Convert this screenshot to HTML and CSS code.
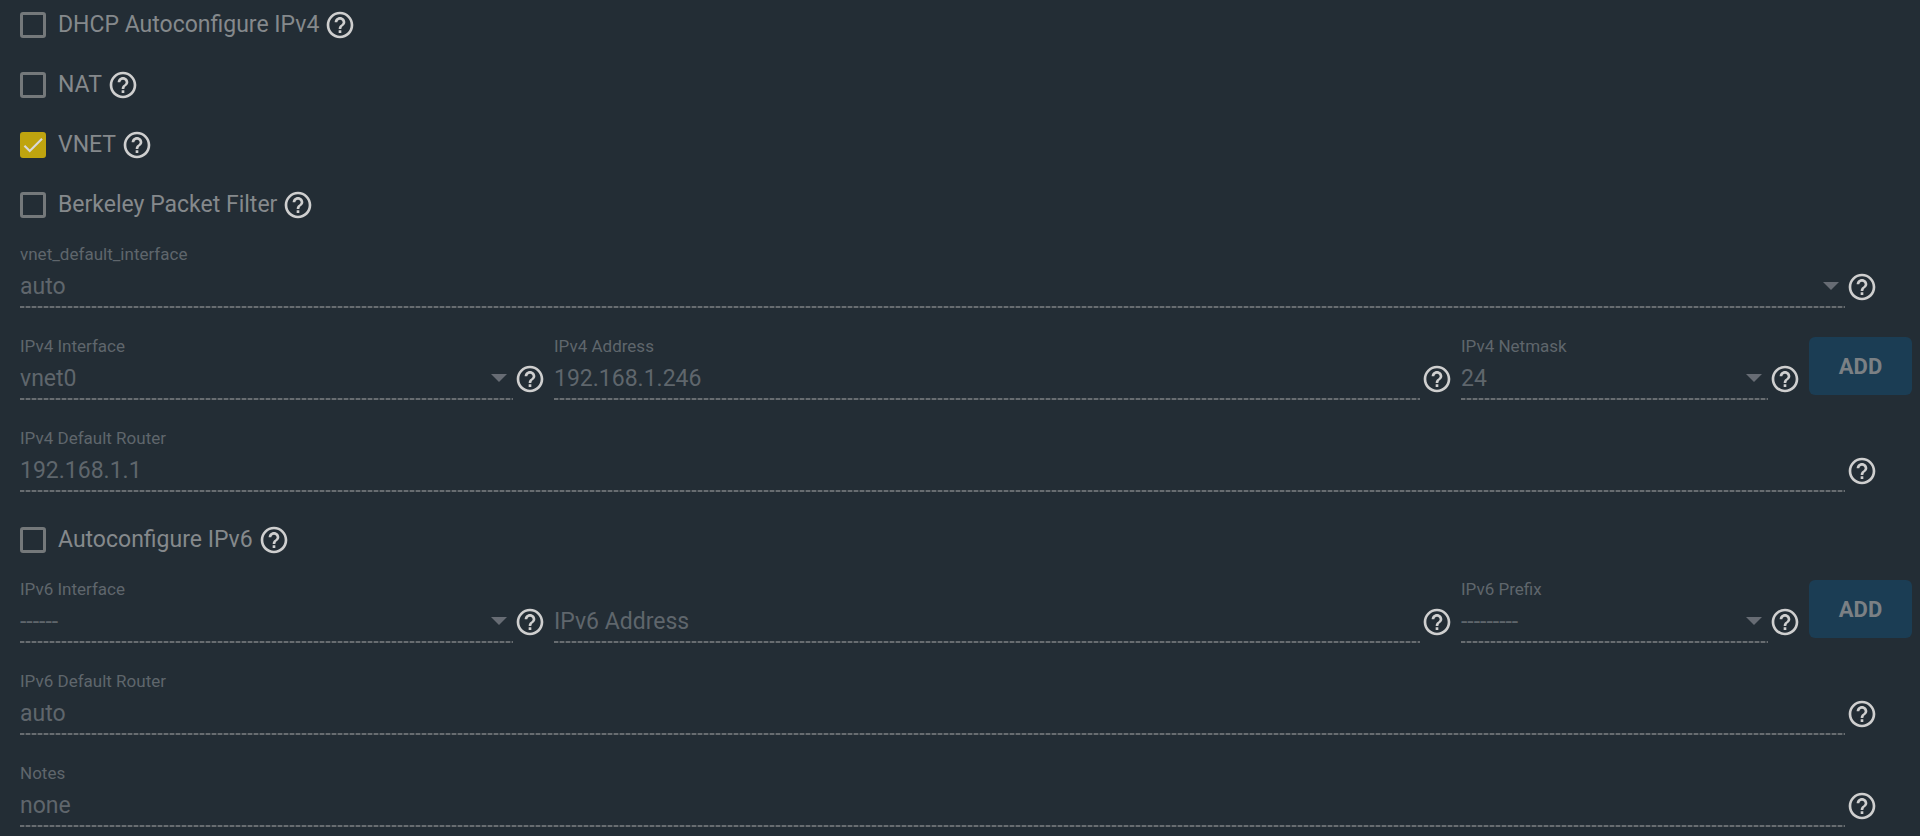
FILE: index.html
```html
<!DOCTYPE html>
<html lang="en">
<head>
    <meta charset="UTF-8">
    <meta name="viewport" content="width=device-width, initial-scale=1.0">
    <title>Jail Properties</title>
    <link rel="stylesheet" href="styles.css">
</head>
<body>
    <!-- Shared icons -->
    <svg class="sprite" aria-hidden="true">
        <symbol id="help" viewBox="0 0 24 24">
            <path d="M11 18h2v-2h-2v2zm1-16C6.480 2 2 6.480 2 12s4.480 10 10 10 10-4.480 10-10S17.520 2 12 2zm0 18c-4.410 0-8-3.590-8-8s3.590-8 8-8 8 3.590 8 8-3.590 8-8 8zm0-14c-2.210 0-4 1.790-4 4h2c0-1.100.9-2 2-2s2 .9 2 2c0 2-3 1.750-3 5h2c0-2.250 3-2.500 3-5 0-2.210-1.790-4-4-4z"/>
        </symbol>
        <symbol id="arrow" viewBox="0 0 16 8">
            <path d="M0 0h16l-8 8z"/>
        </symbol>
        <symbol id="check" viewBox="0 0 24 24">
            <path d="M4.100 12.700L9 17.600 20.300 6.300" fill="none" stroke="currentColor" stroke-width="2"/>
        </symbol>
    </svg>

    <form class="jail-form">
        <div class="check-group">
            <div class="check-row">
                <label class="check"><input type="checkbox"><svg><use href="#check"/></svg>DHCP Autoconfigure IPv4</label>
                <svg class="help"><use href="#help"/></svg>
            </div>
            <div class="check-row">
                <label class="check"><input type="checkbox"><svg><use href="#check"/></svg>NAT</label>
                <svg class="help"><use href="#help"/></svg>
            </div>
            <div class="check-row">
                <label class="check"><input type="checkbox" checked><svg><use href="#check"/></svg>VNET</label>
                <svg class="help"><use href="#help"/></svg>
            </div>
            <div class="check-row">
                <label class="check"><input type="checkbox"><svg><use href="#check"/></svg>Berkeley Packet Filter</label>
                <svg class="help"><use href="#help"/></svg>
            </div>
        </div>

        <div class="row">
            <div class="field">
                <label for="vnet-default">vnet_default_interface</label>
                <div class="control">
                    <select id="vnet-default" disabled><option>auto</option></select>
                    <svg class="arrow"><use href="#arrow"/></svg>
                </div>
            </div>
            <svg class="help"><use href="#help"/></svg>
        </div>

        <div class="row row-address">
            <div class="cell">
                <div class="field">
                    <label for="ip4-interface">IPv4 Interface</label>
                    <div class="control">
                        <select id="ip4-interface" disabled><option>vnet0</option></select>
                        <svg class="arrow"><use href="#arrow"/></svg>
                    </div>
                </div>
                <svg class="help"><use href="#help"/></svg>
            </div>
            <div class="cell">
                <div class="field">
                    <label for="ip4-address">IPv4 Address</label>
                    <div class="control">
                        <input id="ip4-address" type="text" value="192.168.1.246" disabled>
                    </div>
                </div>
                <svg class="help"><use href="#help"/></svg>
            </div>
            <div class="cell">
                <div class="field">
                    <label for="ip4-netmask">IPv4 Netmask</label>
                    <div class="control">
                        <select id="ip4-netmask" disabled><option>24</option></select>
                        <svg class="arrow"><use href="#arrow"/></svg>
                    </div>
                </div>
                <svg class="help"><use href="#help"/></svg>
            </div>
            <button class="add" type="button" disabled>ADD</button>
        </div>

        <div class="row">
            <div class="field">
                <label for="ip4-router">IPv4 Default Router</label>
                <div class="control">
                    <input id="ip4-router" type="text" value="192.168.1.1" disabled>
                </div>
            </div>
            <svg class="help"><use href="#help"/></svg>
        </div>

        <div class="check-group">
            <div class="check-row">
                <label class="check"><input type="checkbox"><svg><use href="#check"/></svg>Autoconfigure IPv6</label>
                <svg class="help"><use href="#help"/></svg>
            </div>
        </div>

        <div class="row row-address">
            <div class="cell">
                <div class="field">
                    <label for="ip6-interface">IPv6 Interface</label>
                    <div class="control">
                        <select id="ip6-interface" disabled><option>------</option></select>
                        <svg class="arrow"><use href="#arrow"/></svg>
                    </div>
                </div>
                <svg class="help"><use href="#help"/></svg>
            </div>
            <div class="cell">
                <div class="field">
                    <div class="control">
                        <input type="text" placeholder="IPv6 Address" aria-label="IPv6 Address" disabled>
                    </div>
                </div>
                <svg class="help"><use href="#help"/></svg>
            </div>
            <div class="cell">
                <div class="field">
                    <label for="ip6-prefix">IPv6 Prefix</label>
                    <div class="control">
                        <select id="ip6-prefix" disabled><option>---------</option></select>
                        <svg class="arrow"><use href="#arrow"/></svg>
                    </div>
                </div>
                <svg class="help"><use href="#help"/></svg>
            </div>
            <button class="add" type="button" disabled>ADD</button>
        </div>

        <div class="row">
            <div class="field">
                <label for="ip6-router">IPv6 Default Router</label>
                <div class="control">
                    <input id="ip6-router" type="text" value="auto" disabled>
                </div>
            </div>
            <svg class="help"><use href="#help"/></svg>
        </div>

        <div class="row">
            <div class="field">
                <label for="notes">Notes</label>
                <div class="control">
                    <input id="notes" type="text" value="none" disabled>
                </div>
            </div>
            <svg class="help"><use href="#help"/></svg>
        </div>
    </form>
</body>
</html>
```
FILE: styles.css
```css
* {
    box-sizing: border-box;
    margin: 0;
    padding: 0;
}

body {
    font-family: Roboto, sans-serif;
    font-size: 23px;
    color: #85898c;
    background-color: #232d35;
}

.sprite {
    display: none;
}

/* Form layout */
.jail-form {
    display: flex;
    flex-direction: column;
    padding: 9px 8px 0 20px;
}

.help {
    flex: none;
    width: 32px;
    height: 32px;
    fill: #cfcfcf;
}

/* Checkbox rows */
.check-group {
    display: grid;
    gap: 28px;
    margin-bottom: 21px;
}

.row + .check-group {
    margin-top: 6px;
}

.check-row {
    display: flex;
    align-items: center;
    gap: 5px;
    height: 32px;
}

.check {
    display: grid;
    grid-template-columns: 26px auto;
    column-gap: 12px;
    align-items: center;
    line-height: 32px;
}

.check input,
.check svg {
    grid-area: 1 / 1;
    width: 26px;
    height: 26px;
}

.check input {
    appearance: none;
    border: 3px solid #74787a;
    border-radius: 3px;
}

.check svg {
    visibility: hidden;
    color: #d9d9d9;
    pointer-events: none;
}

.check input:checked {
    border-color: #bfa40f;
    background-color: #bfa40f;
}

.check input:checked + svg {
    visibility: visible;
}

/* Text and select fields */
.row {
    display: flex;
    align-items: flex-end;
    gap: 1px;
    padding-right: 34px;
    margin-bottom: 26px;
}

.row:last-child {
    margin-bottom: 0;
}

.row .help {
    margin-bottom: 5px;
}

.field {
    flex: 1;
    min-width: 0;
}

.field label {
    display: block;
    font-size: 17px;
    line-height: 24px;
    color: #5f666c;
}

.control {
    display: grid;
    grid-template-columns: 1fr 16px;
    align-items: center;
    height: 42px;
    padding: 0 6px 2px 0;
    background: repeating-linear-gradient(90deg, #676c70 0 4px, #3d454b 4px 6px) bottom / 100% 2px no-repeat;
}

.control input,
.control select {
    grid-area: 1 / 1 / 2 / 3;
    width: 100%;
    height: 40px;
    appearance: none;
    border: none;
    background: transparent;
    font: inherit;
    color: #5f666c;
    opacity: 1;
}

.control input::placeholder {
    color: #5f666c;
}

.arrow {
    grid-area: 1 / 2;
    width: 16px;
    height: 8px;
    fill: #676c74;
}

/* Address rows */
.row-address {
    display: grid;
    grid-template-columns: 526fr 899fr 340fr 103px;
    gap: 8px;
    padding-right: 0;
}

.cell {
    display: flex;
    align-items: flex-end;
    gap: 1px;
}

.add {
    align-self: start;
    height: 58px;
    margin-top: 3px;
    border: none;
    border-radius: 6px;
    background-color: #1b3d54;
    font: bold 22px Roboto, sans-serif;
    color: #7b8084;
}
```
